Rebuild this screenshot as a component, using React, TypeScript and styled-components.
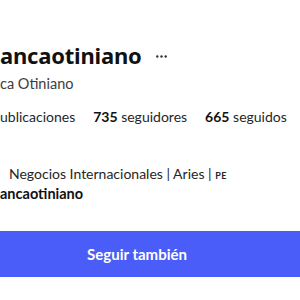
import React from 'react';
import styled, { createGlobalStyle } from 'styled-components';

const GlobalStyle = createGlobalStyle`
  html, body {
    margin: 0;
    padding: 0;
    background: #ffffff;
  }
  body {
    font-family: Lato, "Noto Sans", sans-serif;
    color: #1c1c1c;
    width: 300px;
    height: 300px;
    overflow: hidden;
  }
`;

const Profile = styled.div`
  width: 300px;
  padding-top: 41px;
  display: flex;
  flex-direction: column;
`;

const TitleRow = styled.div`
  display: flex;
  align-items: center;
  gap: 14px;
  height: 28px;
`;

const Username = styled.h1`
  margin: 0;
  font-family: "Noto Sans", sans-serif;
  font-size: 22px;
  font-weight: 700;
  color: #111111;
  letter-spacing: -0.2px;
  line-height: 28px;
`;

const MoreButton = styled.span`
  display: flex;
  align-items: center;
  margin-top: 2px;
`;

const FullName = styled.div`
  margin-top: 6px;
  font-size: 14.5px;
  color: #3d3d3d;
  line-height: 18px;
`;

const Stats = styled.div`
  display: flex;
  gap: 18px;
  margin-top: 14px;
  font-size: 14px;
  line-height: 20px;
  color: #262626;
`;

const Stat = styled.span`
  white-space: nowrap;
`;

const Count = styled.b`
  font-weight: 700;
  color: #111111;
`;

const Bio = styled.div`
  margin-top: 38px;
  font-size: 14px;
  line-height: 18px;
  color: #262626;
  padding-left: 9px;
`;

const Country = styled.span`
  font-size: 9px;
  font-weight: 700;
  letter-spacing: 0.6px;
`;

const Handle = styled.div`
  font-size: 14.5px;
  font-weight: 700;
  line-height: 18px;
  color: #111111;
`;

const FollowButton = styled.button`
  margin-top: 28px;
  width: 300px;
  height: 46px;
  border: none;
  background: #4a5df9;
  color: #ffffff;
  font-family: inherit;
  font-size: 15px;
  font-weight: 700;
  padding-right: 32px;
`;

function App() {
  return (
    <>
      <GlobalStyle />
      <Profile>
        <TitleRow>
          <Username>ancaotiniano</Username>
          <MoreButton>
            <svg width="11" height="3" viewBox="0 0 11 3">
              <circle cx="1.3" cy="1.5" r="1.2" fill="#333" />
              <circle cx="5.5" cy="1.5" r="1.2" fill="#333" />
              <circle cx="9.7" cy="1.5" r="1.2" fill="#333" />
            </svg>
          </MoreButton>
        </TitleRow>
        <FullName>ca Otiniano</FullName>
        <Stats>
          <Stat>ublicaciones</Stat>
          <Stat><Count>735</Count> seguidores</Stat>
          <Stat><Count>665</Count> seguidos</Stat>
        </Stats>
        <Bio>
          Negocios Internacionales | Aries | <Country>PE</Country>
        </Bio>
        <Handle>ancaotiniano</Handle>
        <FollowButton>Seguir también</FollowButton>
      </Profile>
    </>
  );
}

export default App;
